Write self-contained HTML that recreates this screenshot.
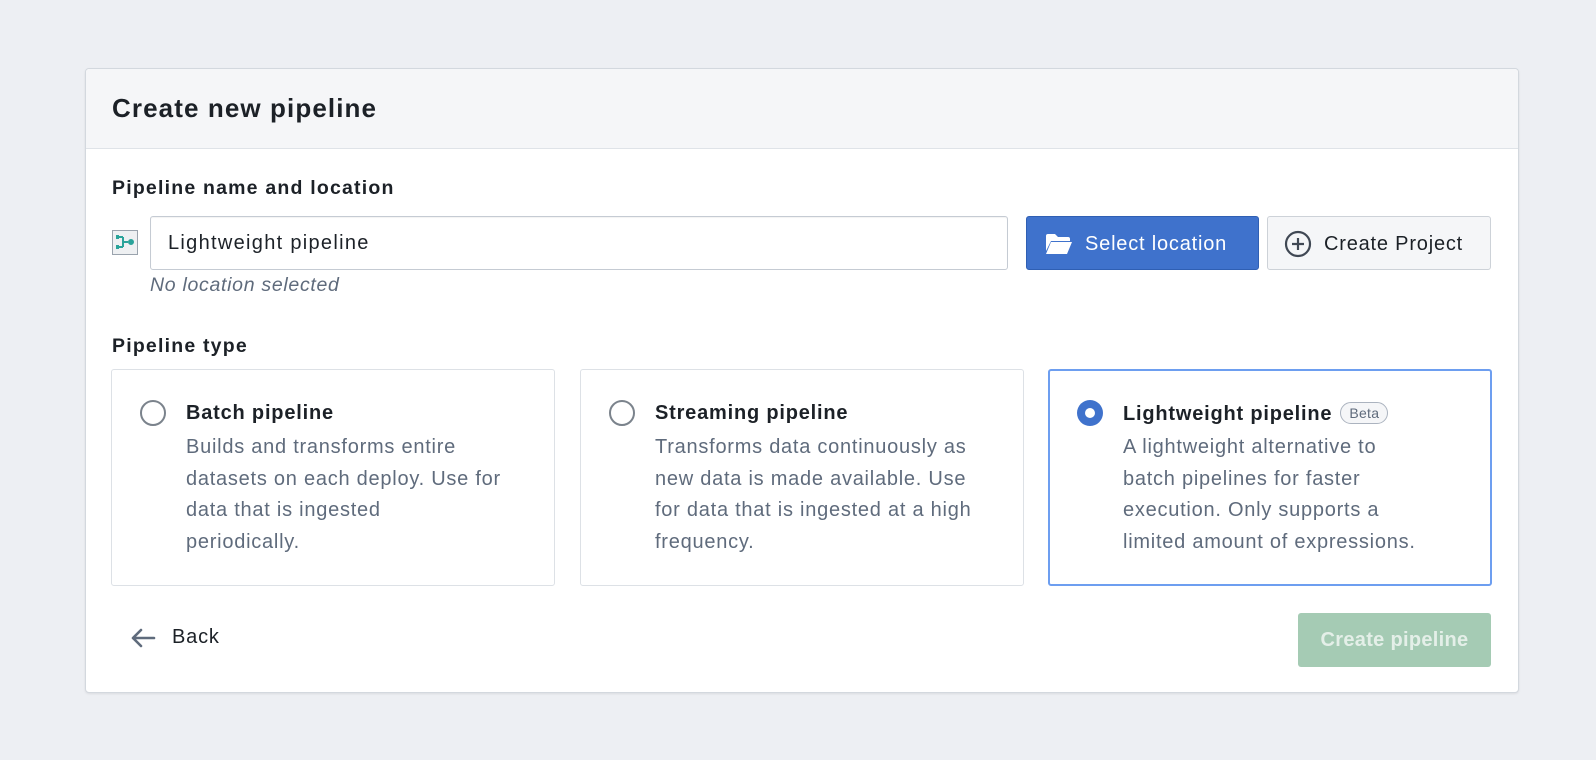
<!DOCTYPE html>
<html><head><meta charset="utf-8"><style>
*{box-sizing:border-box;margin:0;padding:0}
body{width:1596px;height:760px;background:#edeff3;font-family:"Liberation Sans",sans-serif;color:#1c2127;position:relative;overflow:hidden}
.card{position:absolute;left:85px;top:68px;width:1434px;height:625px;background:#fff;border:1px solid #d3d8de;border-radius:4px;box-shadow:0 1px 2px rgba(0,0,0,.08)}
.hdr{height:80px;background:#f5f6f8;border-bottom:1px solid #dfe3e8;border-radius:4px 4px 0 0;padding-left:26px;font-size:26px;font-weight:bold;line-height:78px;color:#1c2127;letter-spacing:1.1px}
.abs{position:absolute}
.lbl{font-size:19.5px;font-weight:bold;color:#1c2127;letter-spacing:1.2px}
.input{left:64px;top:147px;width:858px;height:54px;border:1px solid #c5cbd3;border-radius:3px;font-size:20px;line-height:52px;padding-left:17px;box-shadow:inset 0 1px 1px rgba(0,0,0,.05);letter-spacing:1.3px}
.btn{top:147px;height:54px;border-radius:3px;font-size:20px;line-height:54px;letter-spacing:0.8px;white-space:nowrap}
.sel{left:940px;width:233px;background:#3f72cc;color:#fff;border:1px solid #2f5fb3}
.cp{left:1181px;width:224px;background:#f5f6f8;color:#1c2127;border:1px solid #cdd2d8}
.opt{top:300px;width:444px;height:217px;border:1px solid #dde1e6;border-radius:3px;background:#fff}
.opt.on{border:2px solid #6d9ef0}
.radio{position:absolute;left:28px;top:30px;width:26px;height:26px;border-radius:50%;border:2px solid #7b838c;background:#fff}
.opt.on .radio{border:none;background:#3f72cc;left:27px;top:29px}
.opt.on .radio:after{content:"";position:absolute;left:8px;top:8px;width:10px;height:10px;border-radius:50%;background:#fff}
.t{position:absolute;left:74px;top:32px;font-size:20px;font-weight:bold;color:#1c2127;letter-spacing:0.8px;white-space:nowrap}
.d{position:absolute;left:74px;top:62px;font-size:20px;line-height:31.7px;color:#5f6b7c;letter-spacing:0.75px;white-space:nowrap}
.opt.on .t{left:73px;top:31px}
.opt.on .d{left:73px;top:61px}
.beta{display:inline-block;font-weight:normal;font-size:14px;color:#5f6b7c;border:1px solid #abb3bf;border-radius:12px;padding:0 8px;line-height:20px;margin-left:8px;vertical-align:2px;background:#f5f6f8;letter-spacing:0.3px}
</style></head><body>
<div class="card">
<div class="hdr">Create new pipeline</div>
<div class="abs lbl" style="left:26px;top:108px">Pipeline name and location</div>
<svg class="abs" style="left:26px;top:161px" width="26" height="25" viewBox="0 0 26 25"><rect x="0.5" y="0.5" width="25" height="24" fill="#eef0f2" stroke="#9aa3ad"/><g stroke="#2aa39a" stroke-width="2" fill="none"><path d="M5 7h6M5 17h6M11 7v10M11 12h5"/><circle cx="19" cy="12" r="2" fill="#2aa39a"/></g><rect x="4" y="5" width="3" height="4" fill="#2aa39a"/><rect x="4" y="15" width="3" height="4" fill="#2aa39a"/></svg>
<div class="abs input">Lightweight pipeline</div>
<div class="abs" style="left:64px;top:205px;font-size:19.5px;font-style:italic;color:#5f6b7c;letter-spacing:0.7px">No location selected</div>
<div class="abs btn sel"><svg style="position:absolute;left:18px;top:16px" width="28" height="22" viewBox="0 0 28 22"><path d="M1 3q0-2 2-2h7l3 3h10q2 0 2 2v2H6L1 18z" fill="#fff"/><path d="M6 9h21l-5 12H1z" fill="#fff"/></svg><span style="position:absolute;left:58px">Select location</span></div>
<div class="abs btn cp"><svg style="position:absolute;left:16px;top:13px" width="28" height="28" viewBox="0 0 28 28"><circle cx="14" cy="14" r="12" fill="none" stroke="#404854" stroke-width="2.2"/><path d="M14 8v12M8 14h12" stroke="#404854" stroke-width="2.2"/></svg><span style="position:absolute;left:56px">Create Project</span></div>
<div class="abs lbl" style="left:26px;top:266px">Pipeline type</div>
<div class="abs opt" style="left:25px"><div class="radio"></div><div class="t">Batch pipeline</div><div class="d">Builds and transforms entire<br>datasets on each deploy. Use for<br>data that is ingested<br>periodically.</div></div>
<div class="abs opt" style="left:494px"><div class="radio"></div><div class="t">Streaming pipeline</div><div class="d">Transforms data continuously as<br>new data is made available. Use<br>for data that is ingested at a high<br>frequency.</div></div>
<div class="abs opt on" style="left:962px"><div class="radio"></div><div class="t">Lightweight pipeline<span class="beta">Beta</span></div><div class="d">A lightweight alternative to<br>batch pipelines for faster<br>execution. Only supports a<br>limited amount of expressions.</div></div>
<svg class="abs" style="left:44px;top:558px" width="26" height="22" viewBox="0 0 26 22"><path d="M24 11H3M11 3l-8 8 8 8" fill="none" stroke="#5f6b7c" stroke-width="2.6" stroke-linecap="round" stroke-linejoin="round"/></svg>
<div class="abs" style="left:86px;top:557px;font-size:20px;color:#1c2127;letter-spacing:0.8px">Back</div>
<div class="abs" style="left:1212px;top:544px;width:193px;height:54px;background:#a5cbb4;border-radius:3px;color:#e4efe8;font-size:20px;font-weight:bold;line-height:54px;text-align:center;letter-spacing:0.3px">Create pipeline</div>
</div>
</body></html>
